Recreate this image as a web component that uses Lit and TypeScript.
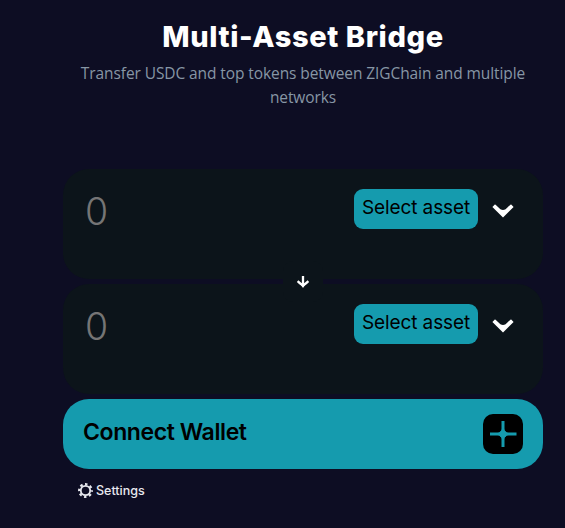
import { LitElement, html, css, svg } from "lit";
import { customElement } from "lit/decorators.js";

const chevron = svg`<svg class="chevron" width="22" height="14" viewBox="0 0 22 14"><path d="M0.4 3L2.8 0.5Q3.2 0.3 3.6 0.7L8.4 5.2Q11 6.8 13.6 5.2L18.4 0.7Q18.8 0.3 19.2 0.5L21.6 3L11 13.4Z" fill="#fff"/></svg>`;

@customElement("asset-panel")
export class AssetPanel extends LitElement {
  static styles = css`
    :host { display: flex; box-sizing: border-box; height: 110px; padding: 20px 29px 0 22px; border-radius: 26px; background: #0c141a; justify-content: space-between; align-items: flex-start; }
    .amount { font: 350 37.5px/46px Inter, sans-serif; color: #757575; }
    .picker { display: flex; align-items: center; gap: 14px; }
    .select { display: flex; justify-content: center; box-sizing: border-box; width: 124px; height: 40px; border-radius: 9px; background: #159bae; color: #000; font: 400 19px/37px Inter, sans-serif; letter-spacing: -0.1px; white-space: nowrap; }
    .chevron { display: block; margin-top: 3px; }
  `;
  render() {
    return html`<span class="amount">0</span>
      <div class="picker"><div class="select">Select asset</div>${chevron}</div>`;
  }
}

@customElement("app-root")
export class AppRoot extends LitElement {
  static styles = css`
    :host { display: block; box-sizing: border-box; height: 528px; overflow: hidden; padding: 17px 22px 0 63px; background: #0d0d23; font-family: Inter, sans-serif; }
    h1 { margin: 0; text-align: center; color: #fff; font: 800 29px/40px Inter, sans-serif; letter-spacing: 0.6px; white-space: nowrap; }
    .intro { margin: 4px 0 0; height: 108px; text-align: center; color: #8796a5; font: 400 15.5px/24px "Open Sans", sans-serif; letter-spacing: -0.09px; }
    .intro span { display: block; white-space: nowrap; }
    .panels { position: relative; display: flex; flex-direction: column; gap: 5px; }
    .swap { position: absolute; left: 220px; top: 92px; width: 40px; height: 41px; border-radius: 10px; background: #0c141a; display: grid; place-items: center; }
    .connect { display: flex; align-items: center; justify-content: space-between; box-sizing: border-box; height: 70px; margin-top: 5px; padding: 0 20px; border-radius: 26px; background: #159bae; color: #000; }
    .label { font: 600 23px/30px Inter, sans-serif; letter-spacing: -0.4px; margin-top: -4px; white-space: nowrap; }
    .settings { display: flex; align-items: center; gap: 3px; margin: 13px 0 0 15px; height: 17px; color: #e8e9ef; font: 500 12.5px/17px Inter, sans-serif; }
    svg { display: block; }
  `;
  render() {
    return html`
      <h1>Multi-Asset Bridge</h1>
      <p class="intro"><span>Transfer USDC and top tokens between ZIGChain and multiple</span><span>networks</span></p>
      <div class="panels">
        <asset-panel></asset-panel>
        <asset-panel></asset-panel>
        <div class="swap"><svg width="14" height="14" viewBox="0 0 14 14"><path d="M7 1V11M1.6 6.2Q5.5 9.7 7 10.5Q8.5 9.7 12.4 6.2" fill="none" stroke="#fff" stroke-width="2.3"/><path d="M4 8.8L7 13L10 8.8Z" fill="#fff"/></svg></div>
      </div>
      <div class="connect"><span class="label">Connect Wallet</span>
        <svg width="40" height="40" viewBox="0 0 40 40"><rect width="40" height="40" rx="10"/><path d="M18.5 7H21.5V14.5Q21.5 18.5 25.5 18.5H33.5V21.5H25.5Q21.5 21.5 21.5 25.5V33H18.5V25.5Q18.5 21.5 14.5 21.5H7V18.5H14.5Q18.5 18.5 18.5 14.5Z" fill="#159bae"/><circle cx="20" cy="20" r="3.6" fill="#159bae"/></svg>
      </div>
      <div class="settings"><svg width="15" height="15" viewBox="0 0 15 15" fill="none" stroke="#e8e9ef"><circle cx="7.5" cy="7.5" r="4.7" stroke-width="1.8"/><circle cx="7.5" cy="7.5" r="6.4" stroke-width="2.1" stroke-dasharray="2.513 2.513" stroke-dashoffset="1.256"/></svg><span>Settings</span></div>`;
  }
}
